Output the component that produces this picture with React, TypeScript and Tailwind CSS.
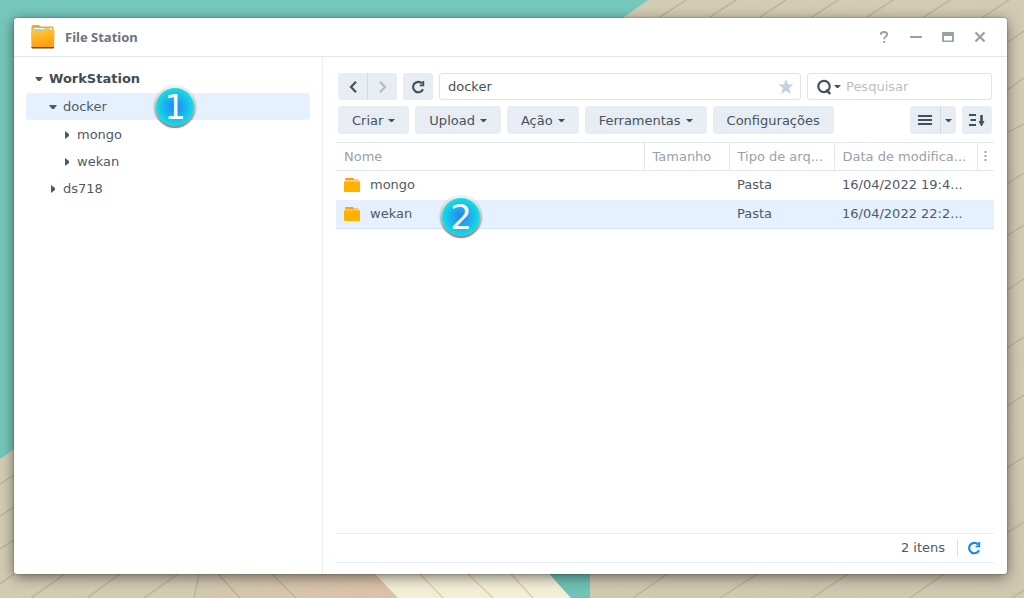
import { ReactNode, useState } from 'react';
import clsx from 'clsx';

type TreeNode = {
  name: string;
  children?: TreeNode[];
};

type FileItem = {
  name: string;
  size: string;
  type: string;
  modified: string;
};

const tree: TreeNode = {
  name: 'WorkStation',
  children: [
    { name: 'docker', children: [{ name: 'mongo' }, { name: 'wekan' }] },
    { name: 'ds718' },
  ],
};

const files: FileItem[] = [
  { name: 'mongo', size: '', type: 'Pasta', modified: '16/04/2022 19:4...' },
  { name: 'wekan', size: '', type: 'Pasta', modified: '16/04/2022 22:2...' },
];

const actions = [
  { label: 'Criar', menu: true },
  { label: 'Upload', menu: true },
  { label: 'Ação', menu: true },
  { label: 'Ferramentas', menu: true },
  { label: 'Configurações', menu: false },
];

const levelPadding = ['pl-[9px]', 'pl-[23px]', 'pl-[37px]'];

const Wallpaper = () => (
  <svg
    className="absolute inset-0 h-full w-full"
    viewBox="0 0 1024 598"
    preserveAspectRatio="none"
    aria-hidden="true"
  >
    <defs>
      <linearGradient id="sand" x1="0" y1="0" x2="1" y2="1">
        <stop offset="0" stopColor="#d6cfb8" />
        <stop offset="1" stopColor="#cfc7af" />
      </linearGradient>
      <linearGradient id="peach" x1="0" y1="0" x2="1" y2="0">
        <stop offset="0" stopColor="#d2c8b1" />
        <stop offset="1" stopColor="#dcc1a8" />
      </linearGradient>
    </defs>
    <rect width="1024" height="598" fill="url(#sand)" />
    <path d="M0 0H648L0 459Z" fill="#76c8bb" />
    <path d="M199 560L194 598H398L362 560Z" fill="url(#peach)" />
    <path d="M362 560L398 598H571L537 560Z" fill="#f3eed7" />
    <path d="M537 560L571 598H590V560Z" fill="#70c3b6" />
    <g stroke="#b5aa87" strokeWidth="1.2" strokeOpacity="0.8" fill="none">
      <path d="M660 17L686 0M710 17L736 0M760 17L786 0M812 17L838 0M867 17L893 0M924 17L950 0M983 17L1009 0" />
      <path d="M1007 43L1024 31M1007 90L1024 78M1007 133L1024 124M1007 184L1024 173M1007 236L1024 225M1007 290L1024 279M1007 348L1024 337M1007 406L1024 395M1007 468L1024 457M1007 533L1024 522" />
      <path d="M0 484L14 475M0 516L14 507M0 549L14 540M0 584L14 574M31 598L65 574M87 598L120 574M144 598L178 574M194 598L199 574M218 574L240 598M272 574L296 598" />
      <path d="M633 598L667 574M720 598L757 574M812 598L848 574M910 598L944 574M1012 598L1024 590" />
    </g>
    <path
      d="M420 574L443 598M468 574L493 598M511 574L533 598"
      stroke="#e3c9b0"
      strokeWidth="1.4"
    />
  </svg>
);

const AppIcon = () => (
  <svg width="24" height="24" viewBox="0 0 24 24" aria-hidden="true">
    <defs>
      <linearGradient id="folder" x1="0" y1="0" x2="0.3" y2="1">
        <stop offset="0" stopColor="#ffcb3d" />
        <stop offset="1" stopColor="#ff9d0a" />
      </linearGradient>
    </defs>
    <path d="M.5 8V1.500A1.500 1.500 0 0 1 2 0h6l2 1.500h11a1.500 1.500 0 0 1 1.500 1.500V8Z" fill="#f9a620" />
    <path d="M2.500 3h18.500V8H2.500Z" fill="#fff" />
    <path d="M3 4h9l2-1h5v3H3Z" fill="#9ed8cf" />
    <path d="M0 7.500Q0 6 1.500 6h9l2-1.500h9.500q1.500 0 1.500 1.500l-.5 17H.5Z" fill="url(#folder)" />
    <path d="M.5 22h22.500v.5a1 1 0 0 1-1 1h-20.500a1 1 0 0 1-1-1Z" fill="#5f4a3c" />
  </svg>
);

const FolderIcon = () => (
  <svg className="shrink-0" width="16" height="14" viewBox="0 0 16 14" aria-hidden="true">
    <path d="M1 2.500V1a1 1 0 0 1 1-1h7l1.500 1.500H14a1 1 0 0 1 1 1Z" fill="#ff9f0a" />
    <path d="M0 4a.8.8 0 0 1 .8-.8h14.400a.8.8 0 0 1 .8.8v9a1 1 0 0 1-1 1H1a1 1 0 0 1-1-1Z" fill="#ffb100" />
  </svg>
);

const CaretDown = ({ className }: { className?: string }) => (
  <svg className={className} width="7" height="3" viewBox="0 0 7 3" aria-hidden="true">
    <path d="M0 0h7L4.200 3H2.800Z" fill="currentColor" />
  </svg>
);

const ReloadIcon = () => (
  <svg width="14" height="14" viewBox="0 0 14 14" aria-hidden="true">
    <path d="M12 9.200A5.200 5.200 0 1 1 11 3.400" fill="none" stroke="currentColor" strokeWidth="2.200" />
    <path d="M13.200 1V6.200H8L9.500 4.400h1.800V1Z" fill="currentColor" />
  </svg>
);

const Badge = ({ children, className }: { children: ReactNode; className: string }) => (
  <span
    className={clsx(
      'absolute z-10 flex size-[42px] items-center justify-center rounded-full bg-linear-to-b from-[#f2f2f2] to-[#8c8c8c] shadow-[0_0_2px_rgba(0,0,0,0.25)]',
      className,
    )}
  >
    <span className="flex size-[38px] items-center justify-center rounded-full bg-radial from-[#2b7cf5] to-[#18dde2] to-70% text-[34px] leading-[38px] font-normal text-white">
      {children}
    </span>
  </span>
);

const TreeItem = ({ node, level = 0 }: { node: TreeNode; level?: number }) => {
  const selected = node.name === 'docker';

  return (
    <li>
      <div
        className={clsx(
          'relative flex h-[27px] items-center rounded-[4px]',
          levelPadding[level],
          selected && 'bg-[#e5f1fe]',
        )}
      >
        <button type="button" className="flex items-center">
          <span className="flex w-[14px] items-center text-[#505a64]">
            {node.children ? (
              <svg width="8" height="4" viewBox="0 0 8 4" aria-hidden="true">
                <path d="M0 0h8L5 4H3Z" fill="currentColor" />
              </svg>
            ) : (
              <svg className="ml-[2px]" width="4" height="8" viewBox="0 0 4 8" aria-hidden="true">
                <path d="M0 0v8L4 5V3Z" fill="currentColor" />
              </svg>
            )}
          </span>
          <span className={clsx(level === 0 && 'font-bold text-[#414b55]')}>{node.name}</span>
        </button>
        {selected && <Badge className="top-[-7px] left-[128px]">1</Badge>}
      </div>
      {node.children && (
        <ul className="pt-px">
          {node.children.map((child) => (
            <TreeItem key={child.name} node={child} level={level + 1} />
          ))}
        </ul>
      )}
    </li>
  );
};

const WindowControls = () => (
  <div className="flex items-center gap-[16px] text-[#98a0a8]">
    <button type="button" aria-label="Ajuda" className="flex size-[16px] items-center justify-center">
      <svg width="10" height="14" viewBox="0 0 10 14" aria-hidden="true">
        <path d="M1.800 4.800C1.800 2.800 3 2 5 2S8.200 3 8.200 4.500C8.200 6.500 5.200 6.500 5.200 9.200" fill="none" stroke="currentColor" strokeWidth="1.900" />
        <path d="M4.200 11h2v2h-2Z" fill="currentColor" />
      </svg>
    </button>
    <button type="button" aria-label="Minimizar" className="flex size-[16px] items-center justify-center">
      <svg width="12" height="2" viewBox="0 0 12 2" aria-hidden="true">
        <path d="M0 0h12v2H0Z" fill="currentColor" />
      </svg>
    </button>
    <button type="button" aria-label="Maximizar" className="flex size-[16px] items-center justify-center">
      <svg width="12" height="10" viewBox="0 0 12 10" aria-hidden="true">
        <path fillRule="evenodd" d="M1 0h10a1 1 0 0 1 1 1v8a1 1 0 0 1-1 1H1a1 1 0 0 1-1-1V1a1 1 0 0 1 1-1ZM2 4v4.500h8V4Z" fill="currentColor" />
      </svg>
    </button>
    <button type="button" aria-label="Fechar" className="flex size-[16px] items-center justify-center">
      <svg width="12" height="12" viewBox="0 0 12 12" aria-hidden="true">
        <path d="M1.500 1.500l9 9M10.500 1.500l-9 9" stroke="currentColor" strokeWidth="2.200" />
      </svg>
    </button>
  </div>
);

const Toolbar = () => {
  const [path, setPath] = useState('docker');
  const [query, setQuery] = useState('');

  return (
    <div className="flex flex-col gap-[6px] px-[2px] text-[#47515b]">
      <div className="flex h-[27px] gap-[6px]">
        <div className="flex overflow-hidden rounded-[3px] bg-[#e8edf4]">
          <button type="button" aria-label="Voltar" className="flex w-[29px] items-center justify-center">
            <svg width="8" height="12" viewBox="0 0 8 12" aria-hidden="true">
              <path d="M7 .8L2 6l5 5.200" fill="none" stroke="currentColor" strokeWidth="2.200" />
            </svg>
          </button>
          <button
            type="button"
            aria-label="Avançar"
            className="flex w-[30px] items-center justify-center border-l border-[#d3dae4] text-[#b4bac3]"
          >
            <svg width="8" height="12" viewBox="0 0 8 12" aria-hidden="true">
              <path d="M1 .8l5 5.200-5 5.200" fill="none" stroke="currentColor" strokeWidth="2.200" />
            </svg>
          </button>
        </div>
        <button
          type="button"
          aria-label="Atualizar"
          className="flex w-[30px] items-center justify-center rounded-[3px] bg-[#e8edf4]"
        >
          <ReloadIcon />
        </button>
        <div className="flex min-w-0 flex-1 items-center rounded-[3px] border border-[#dbe5ef] pr-[6px] pl-[8px]">
          <input
            aria-label="Caminho"
            className="min-w-0 flex-1 outline-none"
            value={path}
            onChange={(e) => setPath(e.target.value)}
          />
          <button type="button" aria-label="Favorito" className="text-[#c6d2df]">
            <svg width="16" height="15" viewBox="0 0 16 15" aria-hidden="true">
              <path d="M8 0l2 5.300 5.600.3-4.400 3.500L12.700 15 8 11.700 3.300 15l1.500-5.900L.4 5.600 6 5.300Z" fill="currentColor" />
            </svg>
          </button>
        </div>
        <div className="flex w-[185px] items-center rounded-[3px] border border-[#dbe5ef] pl-[9px]">
          <svg width="15" height="16" viewBox="0 0 15 16" aria-hidden="true">
            <circle cx="7" cy="7.500" r="5.700" fill="none" stroke="currentColor" strokeWidth="2.200" />
            <path d="M9.200 10.600l4 4.400" stroke="currentColor" strokeWidth="2.600" />
          </svg>
          <CaretDown className="ml-[2px]" />
          <input
            aria-label="Pesquisar"
            className="ml-[5px] min-w-0 flex-1 outline-none placeholder:text-[#b8bfc6]"
            placeholder="Pesquisar"
            value={query}
            onChange={(e) => setQuery(e.target.value)}
          />
        </div>
      </div>
      <div className="flex h-[28px] gap-[6px]">
        {actions.map(({ label, menu }) => (
          <button
            key={label}
            type="button"
            className="flex items-center gap-[5px] rounded-[3px] bg-[#e8edf4] px-[14px] pt-px"
          >
            {label}
            {menu && <CaretDown />}
          </button>
        ))}
        <div className="ml-auto flex overflow-hidden rounded-[3px] bg-[#e8edf4]">
          <button type="button" aria-label="Lista" className="flex w-[30px] items-center justify-center">
            <svg width="14" height="10" viewBox="0 0 14 10" aria-hidden="true">
              <path d="M0 1h14M0 5h14M0 9h14" stroke="currentColor" strokeWidth="2" />
            </svg>
          </button>
          <button
            type="button"
            aria-label="Modo de exibição"
            className="flex w-[16px] items-center justify-center border-l border-[#d3dae4]"
          >
            <CaretDown />
          </button>
        </div>
        <button
          type="button"
          aria-label="Ordenar"
          className="flex w-[30px] items-center justify-center rounded-[3px] bg-[#e8edf4]"
        >
          <svg width="16" height="12" viewBox="0 0 16 12" aria-hidden="true">
            <path d="M0 1h7M1.500 6H7M0 11h7" stroke="currentColor" strokeWidth="2" />
            <path d="M12.500 1v7" stroke="currentColor" strokeWidth="2.600" />
            <path d="M9.500 7h6l-2.500 5h-1Z" fill="currentColor" />
          </svg>
        </button>
      </div>
    </div>
  );
};

const FileTable = () => (
  <table className="mt-[8px] w-full table-fixed border-collapse text-left">
    <colgroup>
      <col />
      <col className="w-[85px]" />
      <col className="w-[105px]" />
      <col className="w-[143px]" />
      <col className="w-[17px]" />
    </colgroup>
    <thead className="text-[#9aa1a9]">
      <tr className="h-[28px] border-y border-[#dfe8f1]">
        <th className="border-r border-[#dfe8f1] px-[8px] font-normal">Nome</th>
        <th className="border-r border-[#dfe8f1] px-[8px] font-normal">Tamanho</th>
        <th className="border-r border-[#dfe8f1] px-[8px] font-normal whitespace-nowrap">Tipo de arq...</th>
        <th className="border-r border-[#dfe8f1] px-[8px] font-normal whitespace-nowrap">
          Data de modifica...
        </th>
        <th>
          <button type="button" aria-label="Colunas" className="mx-auto flex">
            <svg width="3" height="11" viewBox="0 0 3 11" aria-hidden="true">
              <path d="M.5 0h2v2h-2ZM.5 4h2v2h-2ZM.5 8h2v2h-2Z" fill="currentColor" />
            </svg>
          </button>
        </th>
      </tr>
    </thead>
    <tbody>
      {files.map((file) => {
        const selected = file.name === 'wekan';
        return (
          <tr
            key={file.name}
            className={clsx('h-[29px]', selected && 'border-b border-[#d5e4f3] bg-[#e5f1fe]')}
          >
            <td className="relative px-[8px]">
              <div className="flex items-center gap-[10px]">
                <FolderIcon />
                {file.name}
              </div>
              {selected && <Badge className="top-[-4px] left-[104px]">2</Badge>}
            </td>
            <td className="px-[8px]">{file.size}</td>
            <td className="px-[8px]">{file.type}</td>
            <td className="px-[8px] whitespace-nowrap">{file.modified}</td>
            <td />
          </tr>
        );
      })}
    </tbody>
  </table>
);

const App = () => {
  return (
    <div className="relative flex min-h-screen pt-[18px] pr-[17px] pb-[24px] pl-[14px] font-['DejaVu_Sans',sans-serif] text-[13px] leading-[16px] text-[#505a64]">
      <Wallpaper />
      <main className="relative flex min-w-0 flex-1 flex-col rounded-[3px] bg-white shadow-[0_3px_14px_rgba(0,0,0,0.5),0_0_2px_rgba(0,0,0,0.4)]">
        <header className="flex h-[39px] items-center border-b border-[#e1e7f0] pr-[19px] pl-[17px]">
          <AppIcon />
          <h1 className="ml-[10px] flex-1 font-['Noto_Sans',sans-serif] font-bold text-[#6b737c]">
            File Station
          </h1>
          <WindowControls />
        </header>
        <div className="flex min-h-0 flex-1">
          <nav className="w-[309px] shrink-0 border-r border-[#e6eef6] pt-[8px] pr-[12px] pl-[12px]">
            <ul>
              <TreeItem node={tree} />
            </ul>
          </nav>
          <section className="flex min-w-0 flex-1 flex-col pt-[16px] pr-[13px] pb-[11px] pl-[13px]">
            <Toolbar />
            <FileTable />
            <footer className="mt-auto flex h-[30px] items-center justify-end border-t border-b border-t-[#e9edf2] border-b-[#e2eaf3] pr-[13px]">
              <span>2 itens</span>
              <button
                type="button"
                aria-label="Atualizar lista"
                className="ml-[12px] flex h-[18px] items-center border-l border-[#d9e1ea] pl-[9px] text-[#1389f2]"
              >
                <ReloadIcon />
              </button>
            </footer>
          </section>
        </div>
      </main>
    </div>
  );
};

export default App;
